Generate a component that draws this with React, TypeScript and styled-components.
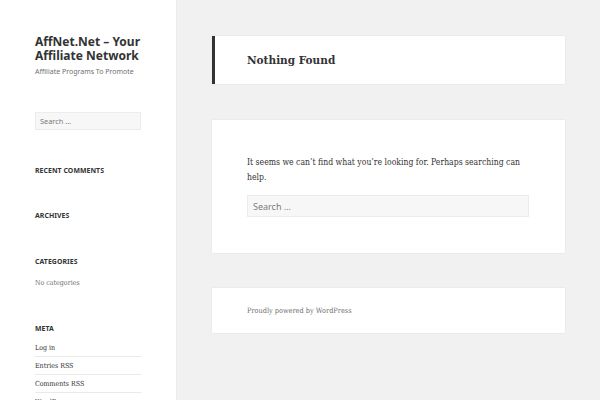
import React from "react";
import styled, { createGlobalStyle } from "styled-components";

const Global = createGlobalStyle`
  html, body { margin: 0; padding: 0; background: #f1f1f1; }
  body { font-family: "DejaVu Serif", serif; font-stretch: condensed; color: #333; overflow: hidden; }
  * { box-sizing: border-box; }
`;

const Page = styled.div`
  display: flex;
  align-items: flex-start;
  width: 600px;
  height: 400px;
  overflow: hidden;
`;

const Sidebar = styled.aside`
  width: 176px;
  height: 400px;
  flex: none;
  background: #fff;
  box-shadow: 0 0 1px rgba(0, 0, 0, 0.15);
  padding: 35px 35px 0 35px;
  overflow: hidden;
`;

const SiteTitle = styled.h1`
  margin: 0;
  font-family: "Noto Sans", "Open Sans", sans-serif;
  font-stretch: normal;
  font-weight: 700;
  font-size: 12px;
  line-height: 14px;
  color: #333;
  width: 110px;
`;

const Tagline = styled.p`
  margin: 3px 0 0;
  font-family: "Noto Sans", "Open Sans", sans-serif;
  font-stretch: normal;
  font-size: 7px;
  line-height: 11px;
  color: #707070;
  white-space: nowrap;
`;

const SearchInput = styled.input<{ $wide?: boolean }>`
  display: block;
  width: 100%;
  height: ${(p) => (p.$wide ? "22px" : "18px")};
  margin: ${(p) => (p.$wide ? "0" : "35px 0 0")};
  padding: 0 ${(p) => (p.$wide ? "5px" : "4px")};
  background: #f7f7f7;
  border: 1px solid #ececec;
  border-radius: 0;
  font-family: "Noto Sans", "Open Sans", sans-serif;
  font-stretch: normal;
  font-size: ${(p) => (p.$wide ? "9px" : "7.4px")};
  color: #707070;
  outline: none;
  &::placeholder { color: #7a7a7a; }
`;

const Widget = styled.section<{ $gap?: number }>`
  margin-top: ${(p) => p.$gap ?? 35}px;
`;

const WidgetTitle = styled.h2`
  margin: 0;
  font-family: "Noto Sans", "Open Sans", sans-serif;
  font-stretch: normal;
  font-weight: 700;
  font-size: 6.9px;
  line-height: 10px;
  text-transform: uppercase;
  letter-spacing: 0.01em;
  color: #333;
`;

const WidgetList = styled.ul<{ $mt?: number }>`
  list-style: none;
  margin: ${(p) => p.$mt ?? 7}px 0 0;
  padding: 0;
`;

const WidgetItem = styled.li<{ $muted?: boolean; $sep?: boolean }>`
  font-size: 7px;
  line-height: 12px;
  padding: 3px 0 2px;
  color: ${(p) => (p.$muted ? "#707070" : "#333")};
  border-bottom: ${(p) => (p.$sep ? "1px solid #eaeaea" : "none")};
`;

const Main = styled.main`
  flex: 1;
  padding: 36px 35px 0 36px;
  display: flex;
  flex-direction: column;
  gap: 36px;
`;

const Card = styled.div`
  background: #fff;
  box-shadow: 0 0 1px rgba(0, 0, 0, 0.15);
  flex: none;
`;

const HeaderCard = styled(Card)`
  height: 48px;
  border-left: 3px solid #333;
  padding: 0 32px;
  display: flex;
  align-items: center;
`;

const PageTitle = styled.h1`
  margin: 0;
  font-size: 11.7px;
  font-weight: 700;
  color: #333;
`;

const ContentCard = styled(Card)`
  padding: 35px 35px 36px;
`;

const BodyText = styled.p`
  margin: 0 0 11px;
  font-size: 8.6px;
  line-height: 14.5px;
  color: #333;
`;

const FooterCard = styled(Card)`
  height: 45px;
  margin-top: -1px;
  padding: 0 35px;
  display: flex;
  align-items: center;
`;

const FooterText = styled.span`
  font-size: 7.3px;
  color: #707070;
`;

const SearchWrap = styled.div`
  width: 282px;
`;

export default function App() {
  return (
    <>
      <Global />
      <Page>
        <Sidebar>
          <SiteTitle>AffNet.Net – Your Affiliate Network</SiteTitle>
          <Tagline>Affiliate Programs To Promote</Tagline>
          <SearchInput placeholder="Search …" />
          <Widget $gap={36}>
            <WidgetTitle>Recent Comments</WidgetTitle>
          </Widget>
          <Widget>
            <WidgetTitle>Archives</WidgetTitle>
          </Widget>
          <Widget $gap={36}>
            <WidgetTitle>Categories</WidgetTitle>
            <WidgetList>
              <WidgetItem $muted>No categories</WidgetItem>
            </WidgetList>
          </Widget>
          <Widget $gap={33}>
            <WidgetTitle>Meta</WidgetTitle>
            <WidgetList $mt={5}>
              <WidgetItem $sep>Log in</WidgetItem>
              <WidgetItem $sep>Entries RSS</WidgetItem>
              <WidgetItem $sep>Comments RSS</WidgetItem>
              <WidgetItem>WordPress.org</WidgetItem>
            </WidgetList>
          </Widget>
        </Sidebar>
        <Main>
          <HeaderCard>
            <PageTitle>Nothing Found</PageTitle>
          </HeaderCard>
          <ContentCard>
            <BodyText>
              It seems we can’t find what you’re looking for. Perhaps searching can help.
            </BodyText>
            <SearchWrap>
              <SearchInput $wide placeholder="Search …" />
            </SearchWrap>
          </ContentCard>
          <FooterCard>
            <FooterText>Proudly powered by WordPress</FooterText>
          </FooterCard>
        </Main>
      </Page>
    </>
  );
}
